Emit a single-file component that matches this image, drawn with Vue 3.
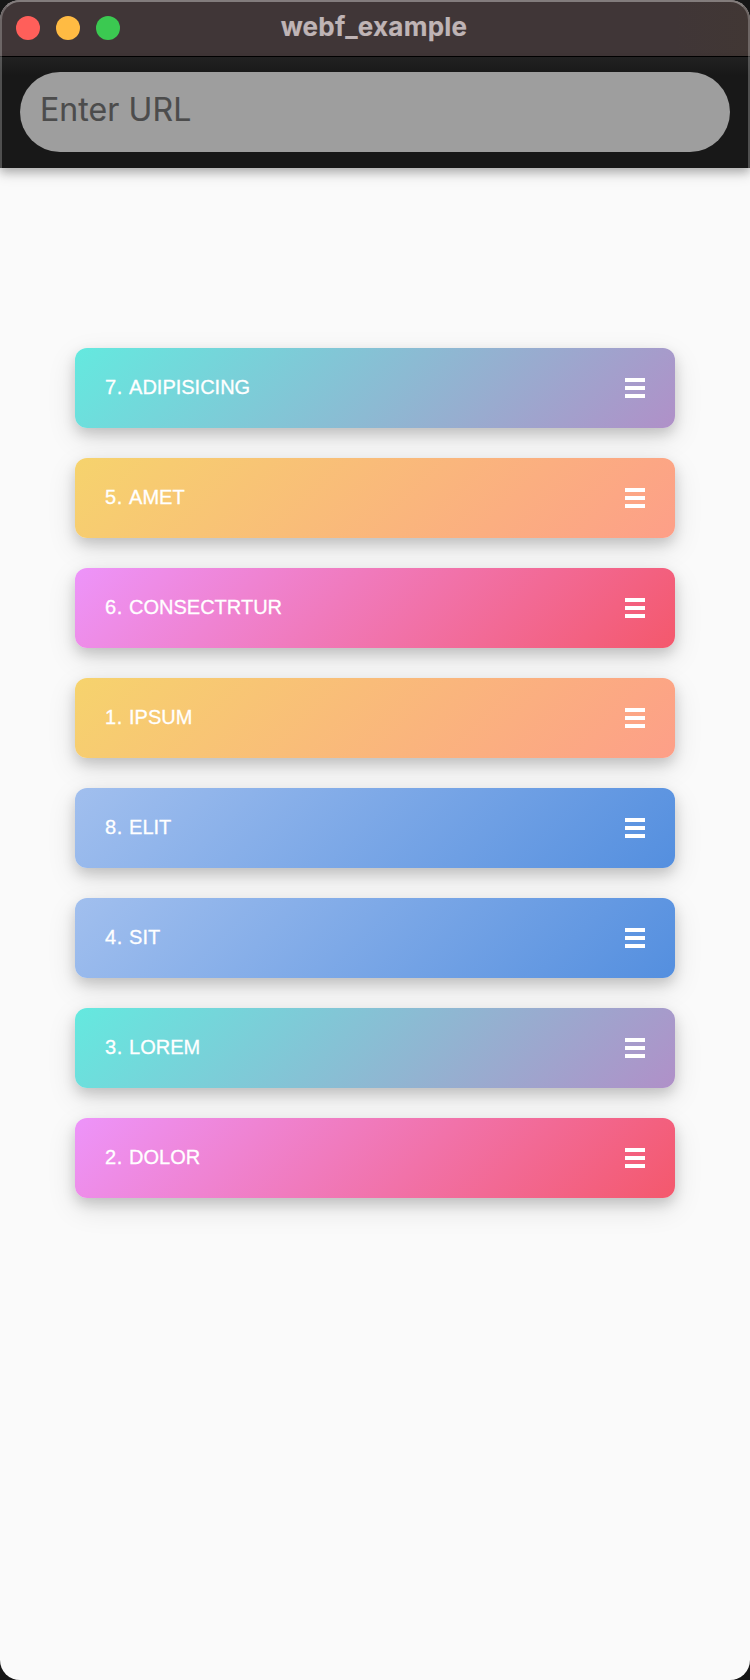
<script setup>
const items = [
  { number: '7.', text: 'ADIPISICING', tone: 'teal' },
  { number: '5.', text: 'AMET', tone: 'amber' },
  { number: '6.', text: 'CONSECTRTUR', tone: 'pink' },
  { number: '1.', text: 'IPSUM', tone: 'amber' },
  { number: '8.', text: 'ELIT', tone: 'blue' },
  { number: '4.', text: 'SIT', tone: 'blue' },
  { number: '3.', text: 'LOREM', tone: 'teal' },
  { number: '2.', text: 'DOLOR', tone: 'pink' },
]
</script>

<template>
  <div class="desktop">
    <div class="window">
      <header class="titlebar">
        <div class="lights">
          <i class="light close"></i>
          <i class="light minimize"></i>
          <i class="light zoom"></i>
        </div>
        <span class="title">webf_example</span>
      </header>
      <div class="toolbar">
        <div class="url"><span>Enter URL</span></div>
      </div>
      <main class="list">
        <div v-for="item in items" :key="item.text" class="item" :class="item.tone">
          <span class="label"><span class="number">{{ item.number }}&nbsp;</span>{{ item.text }}</span>
          <svg class="handle" width="20" height="20" viewBox="0 0 20 20" shape-rendering="crispEdges">
            <path d="M0 0h20v4H0zM0 8h20v4H0zM0 16h20v4H0z" fill="#fff" />
          </svg>
        </div>
      </main>
      <div class="rim"></div>
    </div>
  </div>
</template>

<style>
body {
  background: #161616;
}
</style>

<style scoped>
.desktop {
  width: 750px;
  height: 1680px;
  background: #161616;
}
.window {
  position: relative;
  display: flex;
  flex-direction: column;
  height: 1680px;
  overflow: hidden;
  border-radius: 20px;
  background: #fafafa;
}
.titlebar {
  display: grid;
  grid-template-columns: 1fr auto 1fr;
  align-items: center;
  box-sizing: border-box;
  height: 57px;
  padding: 0 16px;
  border-bottom: 1px solid #000;
  background: linear-gradient(90deg, #403637 90%, #413734);
}
.lights {
  display: flex;
  gap: 16px;
}
.light {
  width: 24px;
  height: 24px;
  border-radius: 50%;
}
.close { background: #ff5f5a; }
.minimize { background: #ffbb43; }
.zoom { background: #3bc951; }
.title {
  padding: 0 2px 3px 0;
  color: #bfb4b5;
  font: 700 26px/32px Inter, sans-serif;
  letter-spacing: 0.25px;
  -webkit-text-stroke: 0.2px #bfb4b5;
}
.toolbar {
  z-index: 1;
  box-sizing: border-box;
  height: 111px;
  padding: 15px 20px 16px;
  background: linear-gradient(#212121, #181818 18px);
  box-shadow: 0 4px 8px rgba(0, 0, 0, 0.17), 0 6px 12px rgba(0, 0, 0, 0.17);
}
.url {
  height: 80px;
  border-radius: 40px;
  background: #9e9e9e;
  padding-left: 20px;
  color: #4c4c4c;
  font: 400 32px/76px Inter, sans-serif;
  letter-spacing: 0.1px;
  -webkit-text-stroke: 0.15px #4c4c4c;
}
.list {
  display: flex;
  flex-direction: column;
  gap: 30px;
  padding: 180px 75px 0;
}
.item {
  display: flex;
  align-items: center;
  justify-content: space-between;
  box-sizing: border-box;
  height: 80px;
  padding: 0 30px;
  border-radius: 12px;
  box-shadow: 0 10px 30px rgba(0, 0, 0, 0.11), 0 6px 13px rgba(0, 0, 0, 0.16);
}
.teal { background: linear-gradient(135deg, #64e9df, #b090c8); }
.amber { background: linear-gradient(135deg, #f6d36d, #fd9f88); }
.pink { background: linear-gradient(135deg, #ed94fa, #f4586c); }
.blue { background: linear-gradient(135deg, #a1bfee, #548fdf); }
.label {
  padding-bottom: 3px;
  color: #fff;
  font: 400 20px/24px "Liberation Sans", Arial, sans-serif;
  -webkit-text-stroke: 0.3px #fff;
}
.number {
  letter-spacing: 0.6px;
}
.rim {
  position: absolute;
  inset: 0 0 auto;
  z-index: 2;
  box-sizing: border-box;
  height: 168px;
  border: 2px solid rgba(255, 255, 255, 0.24);
  border-top-color: rgba(255, 255, 255, 0.35);
  border-bottom: 0;
  border-radius: 20px 20px 0 0;
}
</style>
